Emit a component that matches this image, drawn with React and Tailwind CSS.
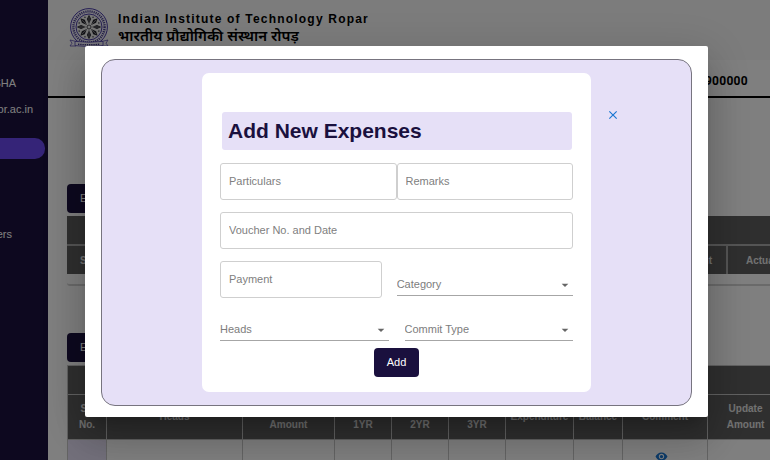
import React from "react";
import { MdArrowDropDown, MdClose, MdVisibility } from "react-icons/md";

const PETALS = [0, 45, 90, 135, 180, 225, 270, 315];

function Seal() {
  return (
    <svg viewBox="0 0 40 40" className="size-10 shrink-0" aria-hidden="true">
      <circle cx="20" cy="19" r="18.4" fill="#f4f2fb" stroke="#4a3ca8" strokeWidth="1" />
      <circle cx="20" cy="19" r="15.6" fill="none" stroke="#4b4390" strokeWidth="2.4" strokeDasharray="1.2 0.9" />
      <circle cx="20" cy="19" r="13" fill="#eeeeee" stroke="#4a3ca8" strokeWidth="1" />
      {PETALS.map((a) => (
        <g key={a} transform={`rotate(${a} 20 19)`}>
          <path d="M20 16 L17.9 11 L20 6.8 L22.1 11 Z" fill="#26262e" />
          <path d="M20 15 V9" stroke="#eeeeee" strokeWidth="0.4" />
        </g>
      ))}
      {PETALS.map((a) => (
        <circle key={a} cx="20" cy="8.4" r="0.8" fill="#55555f" transform={`rotate(${a + 22.5} 20 19)`} />
      ))}
      <circle cx="20" cy="19" r="2" fill="#eeeeee" stroke="#26262e" strokeWidth="0.8" />
      <path d="M1 32 L7 33.4 V38 L1 38 L3 35.2 Z M39 32 L33 33.4 V38 L39 38 L37 35.2 Z" fill="#f4f2fb" stroke="#4a3ca8" strokeWidth="0.7" />
      <path d="M6 33.4 Q20 35 34 33.4 V37.6 Q20 39.6 6 37.6 Z" fill="#f4f2fb" stroke="#4a3ca8" strokeWidth="0.8" />
      <path d="M9 36.2 Q20 37.4 31 36.2" fill="none" stroke="#3f3684" strokeWidth="1.4" strokeDasharray="1.4 0.8" />
    </svg>
  );
}

function Sidebar() {
  return (
    <aside className="flex w-12 shrink-0 flex-col overflow-hidden bg-[#1a103e] text-[11px] leading-4 text-white">
      <p className="mt-[75px] flex justify-end pr-8">SHA</p>
      <p className="mt-[10px] flex justify-end pr-[15px]">pr.ac.in</p>
      <div className="mt-[21px] mr-[3px] h-[21px] rounded-r-[10px] bg-[#6a48f0]" />
      <a href="#users" className="mt-[67px] flex justify-end pr-9">ers</a>
    </aside>
  );
}

function Header() {
  return (
    <header>
      <div className="flex h-[60px] items-start gap-[9px] bg-[#f8f8f8] pt-2 pl-[21px]">
        <Seal />
        <div className="pt-[3px] text-black">
          <h1 className="text-[12px] leading-4 font-bold tracking-widest whitespace-nowrap">
            Indian Institute of Technology Ropar
          </h1>
          <p lang="hi" className="font-['Noto_Sans','Noto_Sans_Devanagari',sans-serif] text-[15px] leading-4 font-semibold whitespace-nowrap">
            भारतीय प्रौद्योगिकी संस्थान रोपड़
          </p>
        </div>
      </div>
      <div className="flex h-[38px] items-center justify-end border-b-2 border-black pt-[6px] pr-[22px] font-['Roboto',sans-serif] text-[12px] font-bold tracking-wide text-black">
        ₹ 900000
      </div>
    </header>
  );
}

function DarkButton({ children, type = "button" }) {
  return (
    <button type={type} className="block h-[29px] rounded-[4px] bg-[#1a103e] px-[13px] text-[11px] text-white">
      {children}
    </button>
  );
}

function SummaryTable() {
  return (
    <div className="mt-[3px] w-[760px] rounded-[3px] border-b-2 border-[#d4d4d4] pb-[10px]">
      <table className="w-full table-fixed border-separate border-spacing-0 bg-[#5e5e5e] text-[10px] text-[#e4e4e4]">
        <colgroup>
          <col className="w-[80px]" />
          <col />
          <col className="w-[101px]" />
        </colgroup>
        <thead>
          <tr className="h-[30px]">
            <th colSpan={3} className="border-b-2 border-[#aaaaaa] p-0" />
          </tr>
          <tr className="h-[28px]">
            <th className="p-0 pl-[13px] text-left font-bold">Sr. No.</th>
            <th className="p-0 pr-[14px] text-right font-bold">Amount</th>
            <th className="border-l-2 border-[#aaaaaa] p-0 pl-[18px] text-left font-bold">Actual</th>
          </tr>
        </thead>
      </table>
    </div>
  );
}

const th = "border border-[#c4c4c4] px-1 py-0 text-center font-bold";
const thLow = "border border-[#c4c4c4] px-1 pt-0 pb-[6px] text-center align-bottom font-bold";
const thTight = "border border-[#c4c4c4] p-0 text-center font-bold";
const td = "border border-[#c8c8c8] p-0";

function HeadsTable() {
  return (
    <table className="mt-[3px] w-[716px] table-fixed border-collapse text-[10px] leading-4 text-[#e4e4e4]">
      <colgroup>
        <col className="w-[39px]" />
        <col className="w-[136px]" />
        <col className="w-[92px]" />
        <col className="w-[57px]" />
        <col className="w-[57px]" />
        <col className="w-[57px]" />
        <col className="w-[68px]" />
        <col className="w-[49px]" />
        <col className="w-[85px]" />
        <col className="w-[76px]" />
      </colgroup>
      <thead className="bg-[#5e5e5e]">
        <tr className="h-[29px]">
          <th colSpan={10} className={th} />
        </tr>
        <tr className="h-[45px]">
          <th className={th}>Sr.<br />No.</th>
          <th className={th}>Heads</th>
          <th className={thLow}>Amount</th>
          <th className={thLow}>1YR</th>
          <th className={thLow}>2YR</th>
          <th className={thLow}>3YR</th>
          <th className={thTight}>Expenditure</th>
          <th className={thTight}>Balance</th>
          <th className={th}>Comment</th>
          <th className={th}>Update<br />Amount</th>
        </tr>
      </thead>
      <tbody>
        <tr className="h-[34px]">
          <td className={`${td} bg-[#e6e0f7]`} />
          <td className={td} />
          <td className={td} />
          <td className={td} />
          <td className={td} />
          <td className={td} />
          <td className={td} />
          <td className={td} />
          <td className={td}>
            <button type="button" aria-label="View comment" className="mx-auto block pr-2">
              <MdVisibility className="size-[13px] text-[#1976d2]" />
            </button>
          </td>
          <td className={td} />
        </tr>
      </tbody>
    </table>
  );
}

function TextField({ label }) {
  return (
    <input
      type="text"
      aria-label={label}
      placeholder={label}
      className="block h-[37px] w-full min-w-0 rounded-[3px] border border-[#cfcfcf] bg-white px-2 pb-[2px] text-[11px] text-gray-800 placeholder:text-[#808080] focus:outline-none"
    />
  );
}

function SelectField({ label }) {
  return (
    <div className="relative min-w-0">
      <select
        aria-label={label}
        defaultValue=""
        className="block h-[22px] w-full appearance-none border-b border-[#a6a6a6] bg-transparent text-[11px] text-[#7d7d7d] focus:outline-none"
      >
        <option value="">{label}</option>
      </select>
      <MdArrowDropDown className="pointer-events-none absolute top-[3px] right-0 size-4 text-[#666666]" />
    </div>
  );
}

function ExpenseDialog() {
  return (
    <div className="fixed inset-0 flex items-start bg-black/50 pt-[46px] pr-[62px] pl-[85px]">
      <div
        role="dialog"
        aria-modal="true"
        aria-labelledby="expense-title"
        className="flex-1 rounded-[2px] bg-white px-4 pt-[13px] pb-[11px] shadow-[0_11px_15px_-7px_rgba(0,0,0,0.2),0_24px_38px_3px_rgba(0,0,0,0.14),0_9px_46px_8px_rgba(0,0,0,0.12)]"
      >
        <div className="flex items-start rounded-[14px] border border-[#77747f] bg-[#e6e0f7] py-[13px] pl-[100px]">
          <form className="w-[389px] rounded-[7px] bg-white px-[18px] pt-[39px] pb-[15px]">
            <h2
              id="expense-title"
              className="mr-[1px] ml-[2px] rounded-[3px] bg-[#e6e0f7] px-[6px] text-[21px] leading-[38px] font-bold text-[#1a103e]"
            >
              Add New Expenses
            </h2>
            <div className="mt-[13px] grid grid-cols-2">
              <TextField label="Particulars" />
              <TextField label="Remarks" />
            </div>
            <div className="mt-3">
              <TextField label="Voucher No. and Date" />
            </div>
            <div className="mt-3 grid grid-cols-[11fr_12fr] items-end gap-[15px]">
              <TextField label="Payment" />
              <div className="pb-[2px]">
                <SelectField label="Category" />
              </div>
            </div>
            <div className="mt-[21px] grid grid-cols-2 gap-4">
              <SelectField label="Heads" />
              <SelectField label="Commit Type" />
            </div>
            <div className="mt-[7px] flex justify-center">
              <DarkButton type="submit">Add</DarkButton>
            </div>
          </form>
          <button type="button" aria-label="Close" className="mt-[35px] ml-[15px]">
            <MdClose className="size-[14px] text-[#1976d2]" />
          </button>
        </div>
      </div>
    </div>
  );
}

export default function App() {
  return (
    <div className="flex h-screen overflow-hidden bg-white font-['Liberation_Sans',Arial,sans-serif]">
      <Sidebar />
      <div className="min-w-0 flex-1 overflow-hidden">
        <Header />
        <main className="pt-[86px] pl-[19px]">
          <DarkButton>Expenses</DarkButton>
          <SummaryTable />
          <div className="mt-[47px]">
            <DarkButton>Expenses</DarkButton>
          </div>
          <HeadsTable />
        </main>
      </div>
      <ExpenseDialog />
    </div>
  );
}
